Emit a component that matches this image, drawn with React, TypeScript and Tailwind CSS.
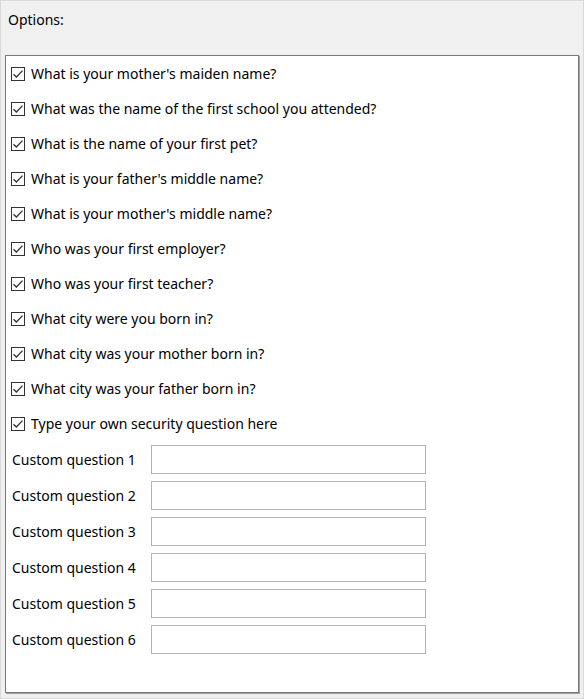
const questions = [
  "What is your mother's maiden name?",
  "What was the name of the first school you attended?",
  "What is the name of your first pet?",
  "What is your father's middle name?",
  "What is your mother's middle name?",
  "Who was your first employer?",
  "Who was your first teacher?",
  "What city were you born in?",
  "What city was your mother born in?",
  "What city was your father born in?",
  "Type your own security question here",
];

function CheckBox() {
  return (
    <span className="flex h-[14px] w-[14px] shrink-0 items-center justify-center border border-[#333333] bg-white">
      <svg width="12" height="12" viewBox="0 0 12 12">
        <path d="M1.5 6.2 L4.4 9 L10.5 2.6" fill="none" stroke="#333333" strokeWidth="1.3" />
      </svg>
    </span>
  );
}

export default function App() {
  return (
    <div
      className="flex h-[699px] w-[584px] flex-col border border-[#dadada] bg-[#f0f0f0] text-[14px] text-black"
      style={{ fontFamily: '"Noto Sans", "Open Sans", sans-serif' }}
    >
      <div className="flex h-[54px] items-start px-[7px] pt-[8px]">Options:</div>
      <div className="mx-[4px] mb-[5px] flex flex-1 flex-col border border-[#7a7a7a] bg-white shadow-[1px_1px_0_#a0a0a0]">
        {questions.map((q) => (
          <label key={q} className="flex h-[35px] items-center gap-[6px] pl-[5px]">
            <CheckBox />
            <span>{q}</span>
          </label>
        ))}
        <div className="flex flex-col gap-[7px] pt-[4px]">
          {[1, 2, 3, 4, 5, 6].map((n) => (
            <div key={n} className="flex h-[29px] items-center pl-[6px]">
              <span className="w-[139px]">Custom question {n}</span>
              <input
                type="text"
                className="h-[29px] w-[275px] border border-[#b4b4b4] bg-white outline-none"
              />
            </div>
          ))}
        </div>
      </div>
    </div>
  );
}
